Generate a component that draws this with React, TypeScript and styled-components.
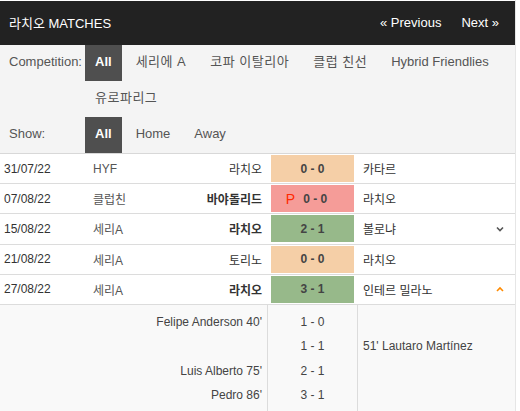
import React from "react";
import styled, { createGlobalStyle } from "styled-components";

const GlobalStyle = createGlobalStyle`
  body {
    margin: 0;
    background: #fff;
    font-family: "Liberation Sans", Arial, "Noto Sans CJK KR", sans-serif;
    font-size: 13px;
    color: #333;
  }
`;

const Widget = styled.div`
  width: 516px;
  height: 411px;
  overflow: hidden;
  border-right: 1px solid #e6e6e6;
  box-sizing: border-box;
`;

const TopBar = styled.div`
  height: 44px;
  background: #222;
  color: #fff;
  display: flex;
  align-items: center;
  justify-content: space-between;
  padding: 0 16px 0 9px;
  margin-top: 1px;
`;

const Title = styled.div`
  font-size: 13px;
  margin-top: -2px;
`;

const Nav = styled.div`
  display: flex;
  gap: 20px;
  margin-top: -2px;
`;

const Filters = styled.div`
  background: #f4f4f4;
  border-bottom: 1px solid #d8d8d8;
  height: 109px;
  box-sizing: border-box;
`;

const FilterRow = styled.div`
  display: grid;
  grid-template-columns: 85px 1fr;
  align-items: start;
`;

const Label = styled.div`
  height: 36px;
  line-height: 34px;
  padding-left: 9px;
  color: #555;
`;

const Options = styled.div`
  display: flex;
  flex-wrap: wrap;
  column-gap: 4px;
`;

const Option = styled.div<{ $active?: boolean; $ko?: boolean }>`
  height: 36px;
  line-height: 34px;
  padding: 0 10px;
  color: ${(p) => (p.$active ? "#fff" : "#555")};
  background: ${(p) => (p.$active ? "#4f4f4f" : "transparent")};
  font-weight: ${(p) => (p.$active ? "bold" : "normal")};
  letter-spacing: ${(p) => (p.$ko ? "0.5px" : "0")};
`;

const Row = styled.div`
  display: grid;
  grid-template-columns: 88px 90px 89px 91px 1fr 26px;
  align-items: center;
  height: 30.2px;
  border-bottom: 1px solid #dcdcdc;
  box-sizing: border-box;
  background: #fff;
  font-size: 12px;
`;

const DateCell = styled.div`
  padding-left: 4px;
`;

const Comp = styled.div`
  padding-left: 5px;
  color: #555;
`;

const Home = styled.div<{ $bold?: boolean }>`
  text-align: right;
  padding-right: 5px;
  white-space: nowrap;
  font-weight: ${(p) => (p.$bold ? "bold" : "normal")};
`;

const Away = styled.div<{ $bold?: boolean }>`
  padding-left: 5px;
  white-space: nowrap;
  font-weight: ${(p) => (p.$bold ? "bold" : "normal")};
`;

const scoreColors = {
  D: "#f5cfa7",
  L: "#f59c98",
  W: "#97b98a",
};

const Score = styled.div<{ $result: "W" | "D" | "L" }>`
  margin: 0 4px;
  height: 27px;
  display: flex;
  align-items: center;
  justify-content: center;
  gap: 8px;
  font-weight: bold;
  color: #444;
  background: ${(p) => scoreColors[p.$result]};
`;

const Pen = styled.span`
  color: #ff2a00;
  font-weight: normal;
  font-size: 14px;
  margin-left: -12px;
`;

const Toggle = styled.div`
  display: flex;
  justify-content: center;
  padding-right: 4px;
`;

const Details = styled.div`
  background: #f9f9f9;
  display: grid;
  grid-template-columns: 267px 91px 1fr;
  height: 110px;
  font-size: 12px;
`;

const GoalCol = styled.div<{ $align: "left" | "center" | "right" }>`
  padding: 5px 5px 0;
  text-align: ${(p) => p.$align};
  color: #444;
  ${(p) =>
    p.$align === "center"
      ? "border-left: 1px solid #dcdcdc; border-right: 1px solid #dcdcdc;"
      : ""}
`;

const GoalLine = styled.div`
  height: 24.5px;
  line-height: 24px;
  white-space: nowrap;
`;

const Chevron = ({ up }: { up?: boolean }) => (
  <svg width="8" height="6" viewBox="0 0 8 6">
    <path
      d={up ? "M1 5 L4 2 L7 5" : "M1 1.5 L4 4.5 L7 1.5"}
      fill="none"
      stroke={up ? "#ff8a00" : "#555"}
      strokeWidth="1.6"
    />
  </svg>
);

type Match = {
  date: string;
  comp: string;
  home: string;
  away: string;
  score: string;
  result: "W" | "D" | "L";
  homeBold?: boolean;
  pen?: boolean;
  toggle?: "up" | "down";
};

const matches: Match[] = [
  { date: "31/07/22", comp: "HYF", home: "라치오", away: "카타르", score: "0 - 0", result: "D" },
  { date: "07/08/22", comp: "클럽친", home: "바야돌리드", away: "라치오", score: "0 - 0", result: "L", homeBold: true, pen: true },
  { date: "15/08/22", comp: "세리A", home: "라치오", away: "볼로냐", score: "2 - 1", result: "W", homeBold: true, toggle: "down" },
  { date: "21/08/22", comp: "세리A", home: "토리노", away: "라치오", score: "0 - 0", result: "D" },
  { date: "27/08/22", comp: "세리A", home: "라치오", away: "인테르 밀라노", score: "3 - 1", result: "W", homeBold: true, toggle: "up" },
];

const goals = [
  { home: "Felipe Anderson 40'", score: "1 - 0", away: "" },
  { home: "", score: "1 - 1", away: "51' Lautaro Martínez" },
  { home: "Luis Alberto 75'", score: "2 - 1", away: "" },
  { home: "Pedro 86'", score: "3 - 1", away: "" },
];

const App = () => {
  return (
    <Widget>
      <GlobalStyle />
      <TopBar>
        <Title>라치오 MATCHES</Title>
        <Nav>
          <span>« Previous</span>
          <span>Next »</span>
        </Nav>
      </TopBar>
      <Filters>
        <FilterRow>
          <Label>Competition:</Label>
          <Options>
            <Option $active>All</Option>
            <Option $ko>세리에 A</Option>
            <Option $ko>코파 이탈리아</Option>
            <Option $ko>클럽 친선</Option>
            <Option>Hybrid Friendlies</Option>
            <Option $ko>유로파리그</Option>
          </Options>
        </FilterRow>
        <FilterRow>
          <Label>Show:</Label>
          <Options>
            <Option $active>All</Option>
            <Option>Home</Option>
            <Option>Away</Option>
          </Options>
        </FilterRow>
      </Filters>
      {matches.map((m) => (
        <Row key={m.date}>
          <DateCell>{m.date}</DateCell>
          <Comp>{m.comp}</Comp>
          <Home $bold={m.homeBold}>{m.home}</Home>
          <Score $result={m.result}>
            {m.pen && <Pen>P</Pen>}
            <span>{m.score}</span>
          </Score>
          <Away>{m.away}</Away>
          <Toggle>{m.toggle && <Chevron up={m.toggle === "up"} />}</Toggle>
        </Row>
      ))}
      <Details>
        <GoalCol $align="right">
          {goals.map((g, i) => (
            <GoalLine key={i}>{g.home}</GoalLine>
          ))}
        </GoalCol>
        <GoalCol $align="center">
          {goals.map((g, i) => (
            <GoalLine key={i}>{g.score}</GoalLine>
          ))}
        </GoalCol>
        <GoalCol $align="left">
          {goals.map((g, i) => (
            <GoalLine key={i}>{g.away}</GoalLine>
          ))}
        </GoalCol>
      </Details>
    </Widget>
  );
};

export default App;
